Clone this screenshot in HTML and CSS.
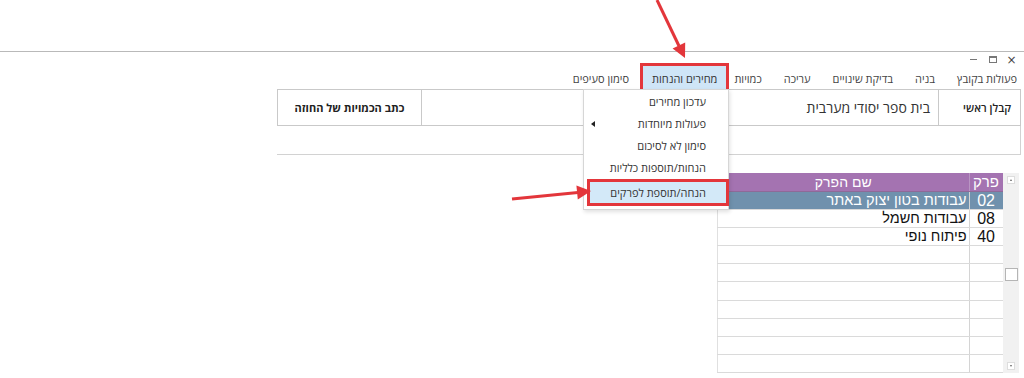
FILE: index.html
```html
<!DOCTYPE html>
<html lang="he">
<head>
    <meta charset="UTF-8">
    <meta name="viewport" content="width=device-width, initial-scale=1.0">
    <title>כתב כמויות</title>
    <link rel="stylesheet" href="styles.css">
</head>
<body>
    <div class="screen">
        <div class="window">
            <div class="titlebar">
                <span class="ctl ctl-close">×</span>
                <span class="ctl"><span class="ctl-max"></span></span>
                <span class="ctl"><span class="ctl-min"></span></span>
            </div>
            <nav class="menubar">
                <span class="menu-item">פעולות בקובץ</span>
                <span class="menu-item">בניה</span>
                <span class="menu-item">בדיקת שינויים</span>
                <span class="menu-item">עריכה</span>
                <span class="menu-item">כמויות</span>
                <span class="menu-item marked">מחירים והנחות</span>
                <span class="menu-item">סימון סעיפים</span>
            </nav>
            <div class="content">
                <div class="project-box">
                    <div class="project-row">
                        <div class="cell cell-label">קבלן ראשי</div>
                        <div class="cell cell-name">בית ספר יסודי מערבית</div>
                        <div class="cell cell-action">כתב הכמויות של החוזה</div>
                    </div>
                    <div class="project-blank"></div>
                </div>
                <div class="chapters">
                    <table class="grid">
                        <colgroup><col class="col-code"><col class="col-name"></colgroup>
                        <thead>
                            <tr><th>פרק</th><th>שם הפרק</th></tr>
                        </thead>
                        <tbody>
                            <tr class="selected"><td class="code">02</td><td class="name">עבודות בטון יצוק באתר</td></tr>
                            <tr><td class="code">08</td><td class="name">עבודות חשמל</td></tr>
                            <tr><td class="code">40</td><td class="name">פיתוח נופי</td></tr>
                            <tr><td></td><td></td></tr>
                            <tr><td></td><td></td></tr>
                            <tr><td></td><td></td></tr>
                            <tr><td></td><td></td></tr>
                            <tr><td></td><td></td></tr>
                            <tr><td></td><td></td></tr>
                            <tr><td></td><td></td></tr>
                        </tbody>
                    </table>
                    <div class="scrollbar">
                        <span class="sb-btn sb-up"></span>
                        <span class="sb-thumb"></span>
                        <span class="sb-btn sb-down"></span>
                    </div>
                </div>
            </div>
        </div>

        <ul class="dropdown">
            <li>עדכון מחירים</li>
            <li class="has-sub"><span>פעולות מיוחדות</span><span class="sub-arrow"></span></li>
            <li>סימון לא לסיכום</li>
            <li>הנחות/תוספות כלליות</li>
            <li class="marked">הנחה/תוספת לפרקים</li>
        </ul>

        <svg class="arrows" width="1024" height="378" viewBox="0 0 1024 378">
            <line x1="657" y1="0" x2="679" y2="46" />
            <polygon points="685,58 672.6,48.5 685.2,42.4" />
            <line x1="512" y1="199" x2="578" y2="192.4" />
            <polygon points="591,191 577.8,199.4 576.4,185.4" />
        </svg>
    </div>
</body>
</html>
```

FILE: styles.css
```css
* {
    box-sizing: border-box;
}

body {
    margin: 0;
    font-family: "Open Sans", "Liberation Sans", sans-serif;
    background-color: #fff;
    color: #333;
}

.screen {
    position: relative;
    width: 1024px;
    height: 378px;
    overflow: hidden;
}

.window {
    margin-top: 51px;
    border-top: 1px solid #b9b9b9;
    direction: rtl;
}

/* title bar */
.titlebar {
    height: 15px;
    display: flex;
    padding-right: 3px;
}

.ctl {
    width: 19px;
    height: 15px;
    display: flex;
    align-items: center;
    justify-content: center;
    color: #444;
}

.ctl-close {
    font-family: "DejaVu Sans", sans-serif;
    font-size: 12px;
}

.ctl-max {
    width: 8px;
    height: 7px;
    border: 1px solid #777;
    border-top-width: 2px;
}

.ctl-min {
    width: 7px;
    height: 1px;
    background-color: #777;
}

/* menu bar */
.menubar {
    height: 22px;
    display: flex;
    align-items: center;
    gap: 22px;
    padding-right: 7px;
    font-size: 11px;
    color: #444;
}

.menu-item {
    white-space: nowrap;
}

.menu-item.marked {
    height: 31px;
    line-height: 25px;
    padding: 0 9px;
    margin: 0 -17px 0 -11px;
    background-color: #cfe5f7;
    border: 3px solid #e3363b;
    color: #333;
}

/* project header */
.content {
    padding: 0 3px 0 277px;
}

.project-row {
    display: flex;
    height: 37px;
    border: 1px solid #c9c9c9;
}

.cell {
    display: flex;
    align-items: center;
}

.cell-label {
    width: 82px;
    padding-right: 9px;
    border-left: 1px solid #c9c9c9;
    font-size: 11px;
    font-weight: 600;
    color: #222;
}

.cell-name {
    flex: 1;
    padding-right: 8px;
    border-left: 1px solid #c9c9c9;
    font-size: 14px;
    color: #333;
}

.cell-action {
    width: 143px;
    justify-content: center;
    font-size: 11px;
    font-weight: bold;
    color: #222;
}

.project-blank {
    height: 29px;
    border-bottom: 1px solid #d2d2d2;
    border-right: 1px solid #d2d2d2;
}

/* chapters grid */
.chapters {
    direction: ltr;
    display: flex;
    justify-content: flex-end;
    margin-top: 18px;
    padding-right: 2px;
}

.grid {
    direction: rtl;
    width: 286px;
    border-collapse: collapse;
    table-layout: fixed;
    font-family: "Liberation Sans", Arial, sans-serif;
}

.col-code {
    width: 34px;
}

.grid th {
    height: 18px;
    padding: 0;
    background-color: #a473b1;
    color: #fff;
    font-size: 14px;
    font-weight: normal;
    border-left: 1px solid #b995c3;
    border-bottom: 1px solid #8e6a98;
}

.grid th:first-child {
    text-align: right;
    padding-right: 4px;
    font-size: 15px;
}

.grid td {
    height: 18.2px;
    padding: 0;
    font-size: 14.5px;
    line-height: 17px;
    color: #111;
    border-bottom: 1px solid #dadada;
    border-left: 1px solid #d4d4d4;
    white-space: nowrap;
}

.grid td:last-child {
    border-left: 1px solid #e0e0e0;
}

.grid td.code {
    text-align: right;
    padding-right: 8px;
    font-size: 16px;
}

.grid td.name {
    text-align: right;
    padding-right: 2px;
}

.grid tr.selected td {
    background-color: #7091ad;
    color: #fff;
}

.scrollbar {
    width: 16px;
    height: 200px;
    background-color: #f1f1f1;
    display: flex;
    flex-direction: column;
    align-items: center;
    padding: 3px 0 3px;
}

.sb-btn {
    width: 8px;
    height: 8px;
    position: relative;
    background-color: #fff;
    border: 1px solid #ddd;
}

.sb-up::after,
.sb-down::after {
    content: "";
    position: absolute;
    left: 2px;
    border-left: 1.5px solid transparent;
    border-right: 1.5px solid transparent;
}

.sb-up::after {
    top: 2px;
    border-bottom: 2px solid #666;
}

.sb-down::after {
    top: 2px;
    border-top: 2px solid #666;
}

.sb-down {
    margin-top: auto;
}

.sb-thumb {
    width: 13px;
    height: 13px;
    margin-top: 84px;
    background-color: #fff;
    border: 1px solid #b5b5b5;
}

/* dropdown menu */
.dropdown {
    position: absolute;
    left: 583px;
    top: 89px;
    width: 146px;
    margin: 0;
    padding: 1px 0 3px;
    list-style: none;
    direction: rtl;
    background-color: #fff;
    border: 1px solid #d6d6d6;
    box-shadow: 1px 2px 4px rgba(0, 0, 0, 0.12);
    font-size: 11px;
    color: #333;
}

.dropdown li {
    height: 22px;
    line-height: 22px;
    padding-right: 22px;
    white-space: nowrap;
}

.dropdown li.has-sub {
    display: flex;
    justify-content: space-between;
    align-items: center;
    padding-left: 7px;
}

.sub-arrow {
    width: 0;
    height: 0;
    border-top: 3.5px solid transparent;
    border-bottom: 3.5px solid transparent;
    border-right: 4px solid #222;
}

.dropdown li.marked {
    height: 27px;
    line-height: 21px;
    margin: 0 -1px 0 3px;
    padding-right: 20px;
    background-color: #d3e9f8;
    border: 3px solid #e3363b;
}

/* annotation arrows */
.arrows {
    position: absolute;
    left: 0;
    top: 0;
    pointer-events: none;
}

.arrows line {
    stroke: #e3363b;
    stroke-width: 3;
}

.arrows polygon {
    fill: #e3363b;
}
```
